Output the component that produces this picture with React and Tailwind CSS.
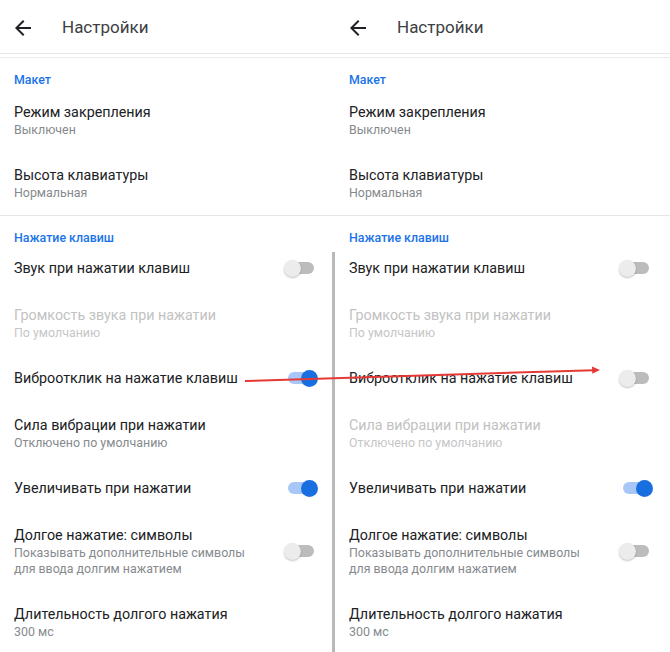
import React from 'react';

const font = { fontFamily: 'Roboto, "Noto Sans", sans-serif' };

const Toggle = ({ on }) => (
  <div className="relative w-[34px] h-[18px] shrink-0 flex items-center">
    <div className={`absolute left-[4px] right-[4px] h-[12px] rounded-full ${on ? 'bg-[#a8c7f6]' : 'bg-[#bcbcbc]'}`} />
    <div
      className={`absolute w-[17px] h-[17px] rounded-full ${
        on ? 'right-0 bg-[#1a6fe0]' : 'left-0 bg-[#ececec] shadow-[0_1px_2px_rgba(0,0,0,0.25)]'
      }`}
    />
  </div>
);

const Item = ({ title, sub, disabled, toggle }) => (
  <div className="flex items-center">
    <div className="flex-1 flex flex-col">
      <div className={`text-[14.3px] leading-[20px] ${disabled ? 'text-[#c2c2c2]' : 'text-[#202124]'}`}>{title}</div>
      {sub && (
        <div className={`text-[12.4px] leading-[16px] whitespace-pre-line ${disabled ? 'text-[#c6c6c6]' : 'text-[#868a8e]'}`}>{sub}</div>
      )}
    </div>
    {toggle !== undefined && <Toggle on={toggle} />}
  </div>
);

const Heading = ({ children }) => (
  <div className="text-[12.4px] leading-[16px] font-medium text-[#1a73e8]">{children}</div>
);

const Panel = ({ right }) => (
  <div className="flex flex-col w-[335px]">
    {/* Toolbar */}
    <div className="h-[54px] pt-[3px] flex items-center border-b border-[#e8e8e8]">
      <svg className="ml-[11px]" width="24" height="24" viewBox="0 0 24 24" fill="#202124">
        <path d="M20 11H7.83l5.59-5.59L12 4l-8 8 8 8 1.41-1.41L7.83 13H20v-2z" />
      </svg>
      <span className="ml-[27px] text-[17px] text-[#3c4043]">Настройки</span>
    </div>
    <div className="h-[4px] border-b border-[#ececec]" />

    {/* Макет */}
    <div className="pt-[14px] pl-[14px] pr-[17px] flex flex-col gap-[14px]">
      <Heading>Макет</Heading>
      <div className="flex flex-col gap-[27px]">
        <Item title="Режим закрепления" sub="Выключен" />
        <Item title="Высота клавиатуры" sub="Нормальная" />
      </div>
    </div>
    <div className="mt-[14px] border-b border-[#e6e6e6]" />

    {/* Нажатие клавиш */}
    <div className="pt-[14px] pl-[14px] pr-[17px]">
      <Heading>Нажатие клавиш</Heading>
    </div>
    <div className={`mt-[6px] flex ${right ? '' : 'border-r-[3px] border-[#b9b9b9]'}`}>
      <div className={`flex-1 pt-[6px] pb-[20px] pl-[14px] ${right ? 'pr-[17px]' : 'pr-[14px]'} flex flex-col gap-[27px]`}>
        <Item title="Звук при нажатии клавиш" toggle={false} />
        <Item title="Громкость звука при нажатии" sub="По умолчанию" disabled />
        <Item title="Виброотклик на нажатие клавиш" toggle={!right} />
        <Item title="Сила вибрации при нажатии" sub="Отключено по умолчанию" disabled={right} />
        <Item title="Увеличивать при нажатии" toggle={true} />
        <Item
          title="Долгое нажатие: символы"
          sub={'Показывать дополнительные символы\nдля ввода долгим нажатием'}
          toggle={false}
        />
        <Item title="Длительность долгого нажатия" sub="300 мс" />
      </div>
    </div>
  </div>
);

export default function App() {
  return (
    <div className="relative w-[670px] h-[652px] overflow-hidden bg-white" style={font}>
      <div className="flex">
        <Panel />
        <Panel right />
      </div>
      {/* red annotation arrow */}
      <svg className="absolute left-0 top-0 pointer-events-none" width="670" height="652">
        <line x1="245" y1="381" x2="594" y2="370.2" stroke="#e53935" strokeWidth="2" />
        <path d="M600 370 L592 366.5 L592.3 373.7 Z" fill="#e53935" />
      </svg>
    </div>
  );
}
